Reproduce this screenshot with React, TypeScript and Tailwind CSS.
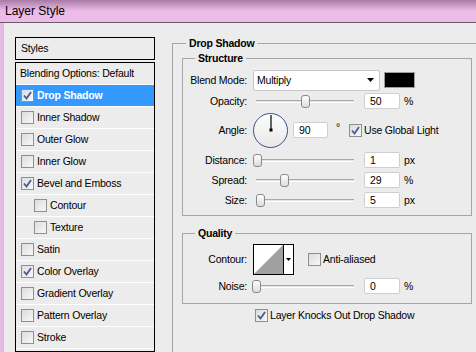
import React from "react";

const STYLES = [
  { name: "Drop Shadow", checked: true, selected: true },
  { name: "Inner Shadow", checked: false },
  { name: "Outer Glow", checked: false },
  { name: "Inner Glow", checked: false },
  { name: "Bevel and Emboss", checked: true },
  { name: "Contour", checked: false, indent: true },
  { name: "Texture", checked: false, indent: true },
  { name: "Satin", checked: false },
  { name: "Color Overlay", checked: true },
  { name: "Gradient Overlay", checked: false },
  { name: "Pattern Overlay", checked: false },
  { name: "Stroke", checked: false },
];

function Check({ checked }: { checked: boolean }) {
  return (
    <span className="w-[13px] h-[13px] shrink-0 border border-[#8e8f8f] bg-gradient-to-br from-[#dcdcdc] to-[#f8f8f8] flex items-center justify-center">
      {checked && (
        <svg width="9" height="9" viewBox="0 0 9 9">
          <path d="M1 4.5 L3.5 7.5 L8 1" fill="none" stroke="#4a5a94" strokeWidth="1.8" />
        </svg>
      )}
    </span>
  );
}

function Slider({ pos }: { pos: number }) {
  return (
    <div className="relative w-[104px] h-[14px] shrink-0">
      <div className="absolute left-[3px] right-[3px] top-[6px] h-[3px] border-t border-[#a8a8a8] bg-[#e4e4e4] border-b border-b-white" />
      <div
        className="absolute top-[1px] w-[9px] h-[13px] rounded-[3px] border border-[#8a8a8a] bg-gradient-to-b from-white to-[#dcdcdc]"
        style={{ left: pos }}
      />
    </div>
  );
}

function NumBox({ value, w = "w-[36px]" }: { value: string; w?: string }) {
  return (
    <div className={`${w} h-[16px] shrink-0 bg-white border border-[#cfcfcf] rounded-[2px] pl-[5px] leading-[14px]`}>
      {value}
    </div>
  );
}

function SliderRow({ label, pos, value, unit, h = "h-[20px]" }: { label: string; pos: number; value: string; unit: string; h?: string }) {
  return (
    <div className={`flex items-center ${h}`}>
      <div className="w-[64px] text-right pr-[1px]">{label}</div>
      <div className="w-[5px]" />
      <Slider pos={pos} />
      <div className="w-[7px]" />
      <NumBox value={value} />
      <span className="ml-[4px]">{unit}</span>
    </div>
  );
}

export default function App() {
  return (
    <div
      className="w-[476px] h-[352px] overflow-hidden bg-[#ececec] text-[10.5px] tracking-[-0.2px] leading-[13px] text-black flex flex-col"
      style={{ fontFamily: '"Liberation Sans", Arial, sans-serif' }}
    >
      <div className="h-[22px] shrink-0 bg-gradient-to-b from-[#a97aa4] via-[#ebbde8] to-[#e9bbe6] flex items-center pl-[5px] text-[12px] tracking-normal">
        Layer Style
      </div>
      <div className="h-[1px] shrink-0 bg-[#6d5a6c]" />
      <div className="flex flex-1 min-h-0">
        <div className="w-[3px] bg-[#e6b8e4] shrink-0" />
        <div className="w-[1px] bg-[#c8c8c8] shrink-0" />
        <div className="flex pl-[11px] pt-[14px]">
          <div className="w-[140px] flex flex-col">
            <div className="h-[23px] border border-black flex items-center pl-[5px]">Styles</div>
            <div className="h-[2px]" />
            <div className="border border-black flex-1 flex flex-col h-[400px]">
              <div className="h-[22px] flex items-center pl-[4px] border-b border-white">
                Blending Options: Default
              </div>
              {STYLES.map((s) => (
                <div
                  key={s.name}
                  className={`h-[22px] flex items-center gap-[2px] border-b border-white ${s.indent ? "pl-[18px]" : "pl-[5px]"} ${s.selected ? "bg-[#3399ff] text-white font-bold" : ""}`}
                >
                  <Check checked={s.checked} />
                  <span className="ml-[1px]">{s.name}</span>
                </div>
              ))}
            </div>
          </div>

          <fieldset className="ml-[17px] w-[330px] border border-[#a5a5a5] pl-[9px] pt-[2px] self-start h-[400px]">
            <legend className="font-bold ml-[4px] px-[3px]">Drop Shadow</legend>
            <fieldset className="w-[290px] border border-[#a5a5a5] pl-[1px] pb-[5px]">
              <legend className="font-bold ml-[11px] px-[3px]">Structure</legend>
              <div className="flex flex-col pt-[4px]">
                <div className="flex items-center h-[22px]">
                  <div className="w-[64px] text-right pr-[1px]">Blend Mode:</div>
                  <div className="w-[5px]" />
                  <div className="w-[127px] h-[21px] bg-white border border-[#c8c8c8] rounded-[2px] flex items-center justify-between pl-[3px] pr-[5px]">
                    <span>Multiply</span>
                    <svg width="7" height="4" viewBox="0 0 7 4">
                      <path d="M0 0 H7 L3.5 4 Z" fill="#000" />
                    </svg>
                  </div>
                  <div className="ml-[4px] w-[31px] h-[16px] bg-black border border-[#9c9c9c]" />
                </div>
                <SliderRow label="Opacity:" pos={48} value="50" unit="%" />
                <div className="flex items-center h-[38px]">
                  <div className="w-[64px] text-right pr-[1px]">Angle:</div>
                  <div className="w-[5px]" />
                  <div className="w-[35px] h-[35px] rounded-full border-[1.5px] border-[#3c5286] bg-gradient-to-b from-[#fdfdfd] to-[#e8e8e8] flex justify-center shrink-0">
                    <svg width="32" height="32" viewBox="0 0 32 32">
                      <line x1="16" y1="1" x2="16" y2="16" stroke="#000" strokeWidth="1.2" />
                      <rect x="14.5" y="14.5" width="3" height="3" fill="#000" />
                    </svg>
                  </div>
                  <div className="w-[5px]" />
                  <NumBox value="90" w="w-[35px]" />
                  <span className="ml-[8px] self-start mt-[10px]">°</span>
                  <div className="ml-[9px] flex items-center gap-[2px]">
                    <Check checked={true} />
                    <span>Use Global Light</span>
                  </div>
                </div>
                <div className="mt-[1px]">
                  <SliderRow label="Distance:" pos={0} value="1" unit="px" />
                </div>
                <SliderRow label="Spread:" pos={27} value="29" unit="%" />
                <SliderRow label="Size:" pos={3} value="5" unit="px" />
              </div>
            </fieldset>
            <div className="h-[11px]" />
            <fieldset className="w-[290px] border border-[#a5a5a5] pl-[1px] pb-[6px]">
              <legend className="font-bold ml-[11px] px-[3px]">Quality</legend>
              <div className="flex flex-col pt-[3px]">
                <div className="flex items-center h-[32px]">
                  <div className="w-[64px] text-right pr-[1px]">Contour:</div>
                  <div className="w-[5px]" />
                  <div className="w-[41px] h-[31px] border border-black bg-white flex shrink-0">
                    <svg width="29" height="29" viewBox="0 0 29 29" className="shrink-0">
                      <path d="M0 29 L29 0 V29 Z" fill="#a0a0a0" />
                    </svg>
                    <div className="flex-1 border-l border-black flex items-center justify-center">
                      <svg width="5" height="3" viewBox="0 0 5 3">
                        <path d="M0 0 H5 L2.5 3 Z" fill="#000" />
                      </svg>
                    </div>
                  </div>
                  <div className="ml-[14px] flex items-center gap-[2px]">
                    <Check checked={false} />
                    <span>Anti-aliased</span>
                  </div>
                </div>
                <SliderRow label="Noise:" pos={-1} value="0" unit="%" h="h-[22px]" />
              </div>
            </fieldset>
            <div className="flex items-center gap-[2px] mt-[5px] ml-[73px]">
              <Check checked={true} />
              <span>Layer Knocks Out Drop Shadow</span>
            </div>
          </fieldset>
        </div>
      </div>
    </div>
  );
}
